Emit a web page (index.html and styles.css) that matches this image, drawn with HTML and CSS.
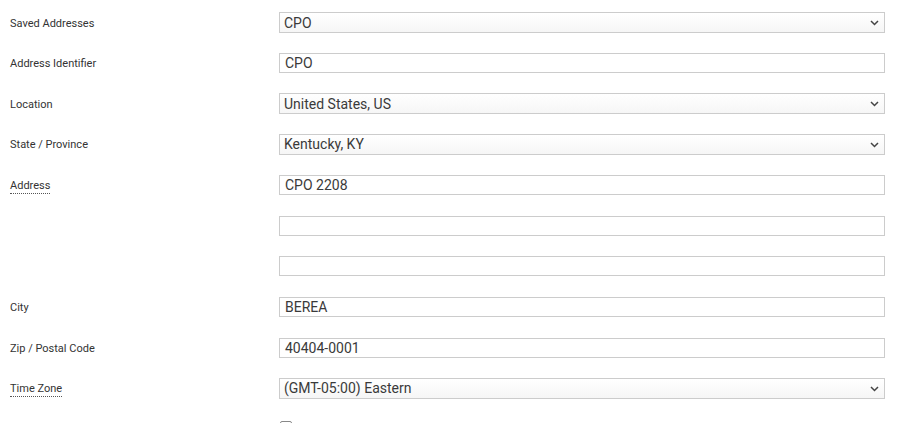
FILE: index.html
```html
<!DOCTYPE html>
<html>
<head>
<meta charset="utf-8">
<link rel="stylesheet" href="styles.css">
</head>
<body>
<form class="form">
  <div class="row">
    <label class="label">Saved Addresses</label>
    <div class="field select"><span>CPO</span><svg class="chev" width="9" height="6" viewBox="0 0 9 6"><path d="M1 1 L4.5 4.5 L8 1" fill="none" stroke="#444" stroke-width="1.5"/></svg></div>
  </div>
  <div class="row">
    <label class="label">Address Identifier</label>
    <div class="field input"><span>CPO</span></div>
  </div>
  <div class="row">
    <label class="label">Location</label>
    <div class="field select"><span>United States, US</span><svg class="chev" width="9" height="6" viewBox="0 0 9 6"><path d="M1 1 L4.5 4.5 L8 1" fill="none" stroke="#444" stroke-width="1.5"/></svg></div>
  </div>
  <div class="row">
    <label class="label">State / Province</label>
    <div class="field select"><span>Kentucky, KY</span><svg class="chev" width="9" height="6" viewBox="0 0 9 6"><path d="M1 1 L4.5 4.5 L8 1" fill="none" stroke="#444" stroke-width="1.5"/></svg></div>
  </div>
  <div class="row">
    <label class="label"><abbr class="hint">Address</abbr></label>
    <div class="field input"><span>CPO 2208</span></div>
  </div>
  <div class="row">
    <label class="label"></label>
    <div class="field input"><span></span></div>
  </div>
  <div class="row">
    <label class="label"></label>
    <div class="field input"><span></span></div>
  </div>
  <div class="row">
    <label class="label">City</label>
    <div class="field input"><span>BEREA</span></div>
  </div>
  <div class="row">
    <label class="label">Zip / Postal Code</label>
    <div class="field input"><span>40404-0001</span></div>
  </div>
  <div class="row">
    <label class="label"><abbr class="hint">Time Zone</abbr></label>
    <div class="field select"><span>(GMT-05:00) Eastern</span><svg class="chev" width="9" height="6" viewBox="0 0 9 6"><path d="M1 1 L4.5 4.5 L8 1" fill="none" stroke="#444" stroke-width="1.5"/></svg></div>
  </div>
  <div class="row">
    <label class="label"></label>
    <div class="check"></div>
  </div>
</form>
</body>
</html>
```
FILE: styles.css
```css
html, body {
  margin: 0;
  padding: 0;
  background: #fff;
  overflow: hidden;
}
body {
  font-family: Roboto, "Liberation Sans", sans-serif;
  color: #333;
}
.form {
  padding-top: 12px;
  display: flex;
  flex-direction: column;
}
.row {
  display: flex;
  align-items: center;
  height: 21px;
  margin-bottom: 19.67px;
}
.label {
  width: 269px;
  padding-left: 10px;
  font-size: 11px;
  line-height: 13px;
  color: #333;
  flex: none;
  margin-top: 1px;
}
.hint {
  text-decoration: none;
  border-bottom: 1px dotted #555;
  padding-bottom: 1px;
}
.field {
  box-sizing: border-box;
  width: 606px;
  border: 1px solid #ccc;
  display: flex;
  align-items: center;
  font-size: 14px;
  color: #3a3a3a;
  flex: none;
}
.input {
  height: 20px;
  padding-left: 5px;
  background: #fff;
  align-self: flex-start;
  margin-top: 0.5px;
}
.select {
  height: 21px;
  padding-left: 4px;
  padding-right: 5px;
  background: linear-gradient(#ffffff, #f6f6f6);
  justify-content: space-between;
}
.chev {
  display: block;
  margin-top: 1px;
}
.check {
  width: 12px;
  height: 12px;
  box-sizing: border-box;
  border: 1px solid #888;
  border-radius: 2px;
  margin-left: 1px;
  align-self: flex-start;
  margin-top: 2px;
}
```
